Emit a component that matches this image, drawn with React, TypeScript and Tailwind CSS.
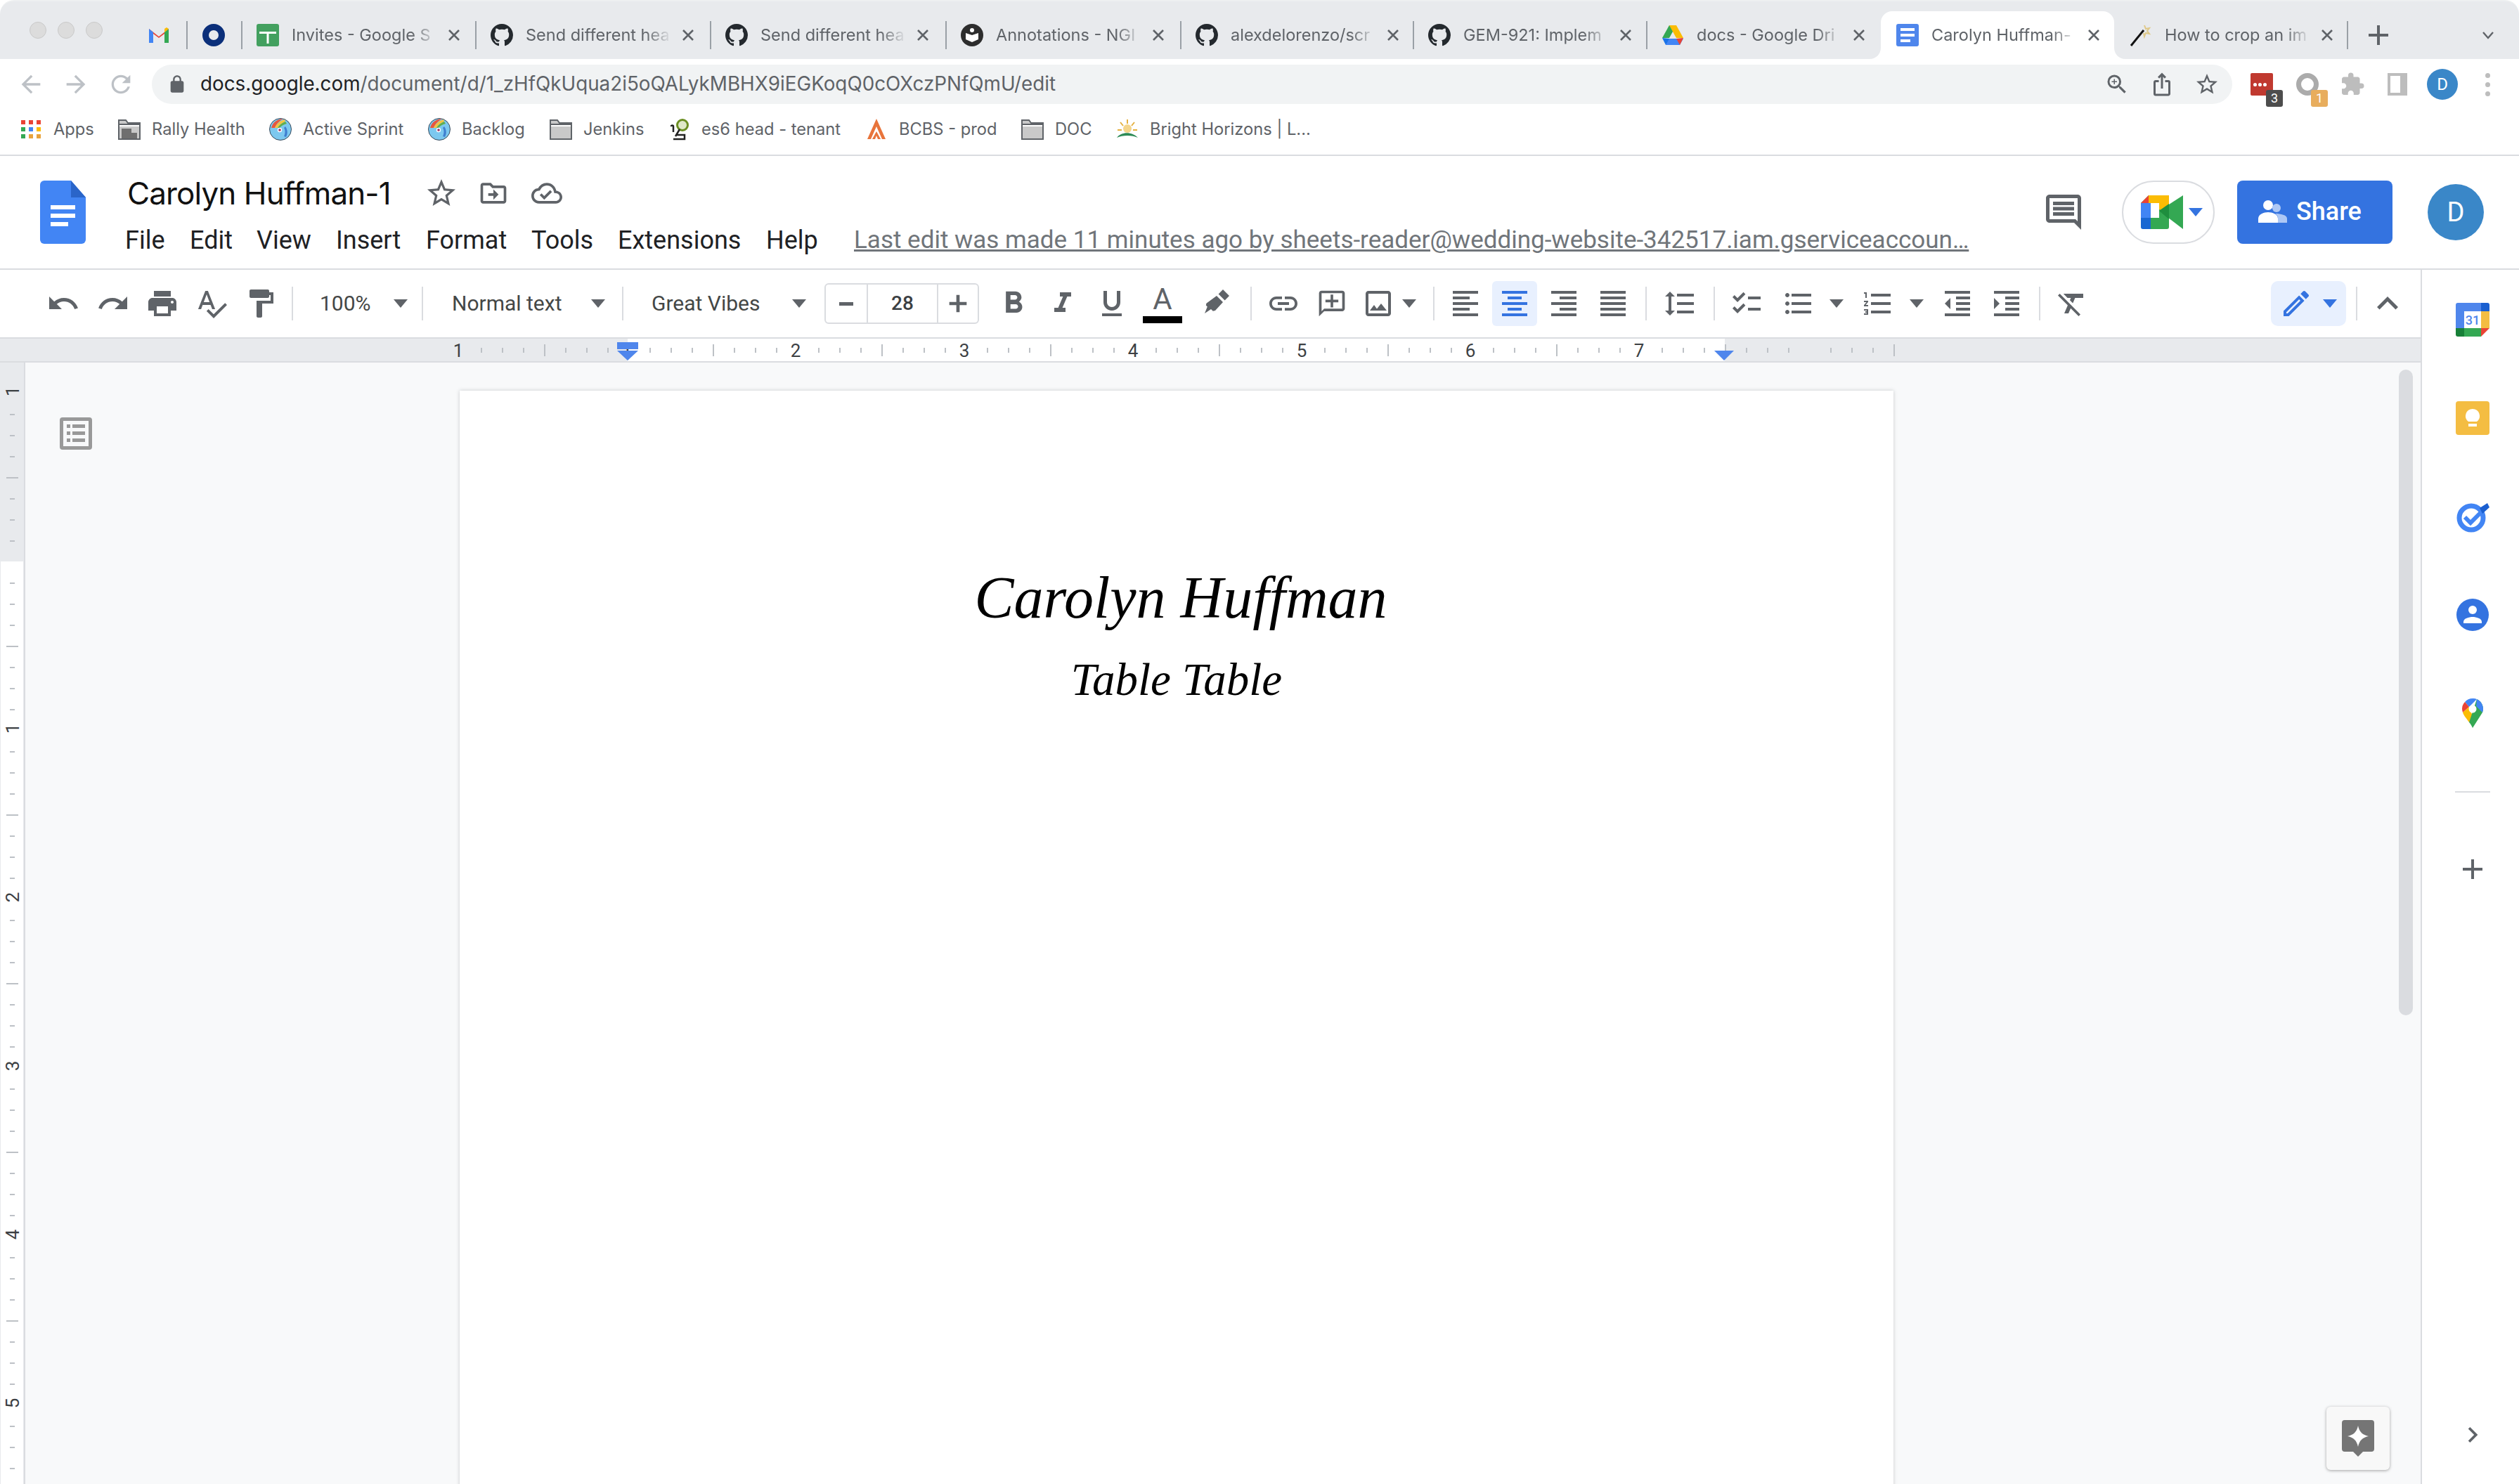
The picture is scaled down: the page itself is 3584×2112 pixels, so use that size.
import React from "react";

const P = {
  undo: "M12.5 8c-2.65 0-5.05.99-6.9 2.6L2 7v9h9l-3.62-3.62c1.39-1.16 3.16-1.88 5.12-1.88 3.54 0 6.55 2.31 7.6 5.5l2.37-.78C21.08 11.03 17.15 8 12.5 8z",
  redo: "M18.4 10.6C16.55 8.99 14.15 8 11.5 8c-4.65 0-8.58 3.03-9.96 7.22L3.9 16c1.05-3.19 4.05-5.5 7.6-5.5 1.95 0 3.73.72 5.12 1.88L13 16h9V7l-3.6 3.6z",
  print: "M19 8H5c-1.66 0-3 1.34-3 3v6h4v4h12v-4h4v-6c0-1.66-1.34-3-3-3zm-3 11H8v-5h8v5zm3-7c-.55 0-1-.45-1-1s.45-1 1-1 1 .45 1 1-.45 1-1 1zm-1-9H6v4h12V3z",
  spell: "M12.45 16h2.09L9.43 3H7.57L2.46 16h2.09l1.12-3h5.64l1.14 3zm-6.02-5L8.5 5.48 10.57 11H6.43zm15.16.59l-8.09 8.09L9.83 16l-1.41 1.41 5.09 5.09L23 13l-1.41-1.41z",
  paint: "M18 4V3c0-.55-.45-1-1-1H5c-.55 0-1 .45-1 1v4c0 .55.45 1 1 1h12c.55 0 1-.45 1-1V6h1v4H9v11c0 .55.45 1 1 1h2c.55 0 1-.45 1-1v-9h8V4h-3z",
  bold: "M15.6 10.79c.97-.67 1.65-1.77 1.65-2.79 0-2.26-1.75-4-4-4H7v14h7.04c2.09 0 3.71-1.7 3.71-3.79 0-1.52-.86-2.82-2.15-3.42zM10 6.5h3c.83 0 1.5.67 1.5 1.5s-.67 1.5-1.5 1.5h-3v-3zm3.5 9H10v-3h3.5c.83 0 1.5.67 1.5 1.5s-.67 1.5-1.5 1.5z",
  italic: "M10 4v3h2.21l-3.42 8H6v3h8v-3h-2.21l3.42-8H18V4z",
  under: "M12 17c3.31 0 6-2.69 6-6V3h-2.5v8c0 1.93-1.57 3.5-3.5 3.5S8.5 12.93 8.5 11V3H6v8c0 3.31 2.69 6 6 6zm-7 2v2h14v-2H5z",
  link: "M3.9 12c0-1.71 1.39-3.1 3.1-3.1h4V7H7c-2.76 0-5 2.24-5 5s2.24 5 5 5h4v-1.9H7c-1.71 0-3.1-1.39-3.1-3.1zM8 13h8v-2H8v2zm9-6h-4v1.9h4c1.71 0 3.1 1.39 3.1 3.1s-1.39 3.1-3.1 3.1h-4V17h4c2.76 0 5-2.24 5-5s-2.24-5-5-5z",
  addc: "M20 2H4c-1.1 0-2 .9-2 2v18l4-4h14c1.1 0 2-.9 2-2V4c0-1.1-.9-2-2-2zm0 14H6l-2 2V4h16v12zM13 5h-2v4H7v2h4v4h2v-4h4V9h-4z",
  image: "M19 3H5c-1.1 0-2 .9-2 2v14c0 1.1.9 2 2 2h14c1.1 0 2-.9 2-2V5c0-1.1-.9-2-2-2zm0 16H5V5h14v14zm-5-7l-3 3.72L9 13l-3 4h12l-4-5z",
  hl: "M17.5 2l4.5 4.5-3.2 3.2-4.5-4.5zM13 6.5l4.5 4.5-5.5 6-1.6.4L9 16l-4.5 3 1.9-4.7-1-1 .3-1.4z",
  left: "M15 15H3v2h12v-2zm0-8H3v2h12V7zM3 13h18v-2H3v2zm0 8h18v-2H3v2zM3 3v2h18V3H3z",
  center: "M7 15v2h10v-2H7zm-4 6h18v-2H3v2zm0-8h18v-2H3v2zm4-6v2h10V7H7zM3 3v2h18V3H3z",
  right: "M3 21h18v-2H3v2zm6-4h12v-2H9v2zm-6-4h18v-2H3v2zm6-4h12V7H9v2zM3 3v2h18V3H3z",
  justify: "M3 21h18v-2H3v2zm0-4h18v-2H3v2zm0-4h18v-2H3v2zm0-4h18V7H3v2zm0-6v2h18V3H3z",
  spacing: "M6 7h2.5L5 3.5 1.5 7H4v10H1.5L5 20.5 8.5 17H6V7zm4-2v2h12V5H10zm0 14h12v-2H10v2zm0-6h12v-2H10v2z",
  check: "M22 7h-9v2h9V7zm0 8h-9v2h9v-2zM5.54 11L2 7.46l1.41-1.41 2.12 2.12 4.24-4.24 1.41 1.41L5.54 11zm0 8L2 15.46l1.41-1.41 2.12 2.12 4.24-4.24 1.41 1.41L5.54 19z",
  bullet: "M4 10.5c-.83 0-1.5.67-1.5 1.5s.67 1.5 1.5 1.5 1.5-.67 1.5-1.5-.67-1.5-1.5-1.5zm0-6c-.83 0-1.5.67-1.5 1.5S3.17 7.5 4 7.5 5.5 6.83 5.5 6 4.83 4.5 4 4.5zm0 12c-.83 0-1.5.68-1.5 1.5s.68 1.5 1.5 1.5 1.5-.68 1.5-1.5-.67-1.5-1.5-1.5zM7 19h14v-2H7v2zm0-6h14v-2H7v2zm0-8v2h14V5H7z",
  number: "M2 17h2v.5H3v1h1v.5H2v1h3v-4H2v1zm1-9h1V4H2v1h1v3zm-1 3h1.8L2 13.1v.9h3v-1H3.2L5 10.9V10H2v1zm5-6v2h14V5H7zm0 14h14v-2H7v2zm0-6h14v-2H7v2z",
  indl: "M11 17h10v-2H11v2zm-8-5l4 4V8l-4 4zm0 9h18v-2H3v2zM3 3v2h18V3H3zm8 6h10V7H11v2zm0 4h10v-2H11v2z",
  indr: "M3 21h18v-2H3v2zM3 8v8l4-4-4-4zm8 9h10v-2H11v2zM3 3v2h18V3H3zm8 6h10V7H11v2zm0 4h10v-2H11v2z",
  clear: "M3.27 5L2 6.27l6.97 6.97L6.5 19h3l1.57-3.66L16.73 21 18 19.73 3.55 5.27 3.27 5zM6 5v.18L8.82 8h2.4l-.72 1.68 2.1 2.1L14.21 8H20V5H6z",
  edit: "M14.06 9.02l.92.92L5.92 19H5v-.92l9.06-9.06M17.66 3c-.25 0-.51.1-.7.29l-1.83 1.83 3.75 3.75 1.83-1.83c.39-.39.39-1.02 0-1.41l-2.34-2.34c-.2-.2-.45-.29-.71-.29zm-3.6 3.19L3 17.25V21h3.75L17.81 9.94l-3.75-3.75z",
  comment: "M21.99 4c0-1.1-.89-2-1.99-2H4c-1.1 0-2 .9-2 2v12c0 1.1.9 2 2 2h14l4 4-.01-18zM20 4v13.17L18.83 16H4V4h16zM6 12h12v2H6zm0-3h12v2H6zm0-3h12v2H6z",
  star: "M22 9.24l-7.19-.62L12 2 9.19 8.63 2 9.24l5.46 4.73L5.82 21 12 17.27 18.18 21l-1.63-7.03L22 9.24zM12 15.4l-3.76 2.27 1-4.28-3.32-2.88 4.38-.38L12 6.1l1.71 4.04 4.38.38-3.32 2.88 1 4.28L12 15.4z",
  move: "M20 6h-8l-2-2H4c-1.1 0-1.99.9-1.99 2L2 18c0 1.1.9 2 2 2h16c1.1 0 2-.9 2-2V8c0-1.1-.9-2-2-2zm0 12H4V6h5.17l2 2H20v10zm-8-4H8v-2h4V9l4 4-4 4v-3z",
  cloud: "M19.35 10.04C18.67 6.59 15.64 4 12 4 9.11 4 6.6 5.64 5.35 8.04 2.34 8.36 0 10.91 0 14c0 3.31 2.69 6 6 6h13c2.76 0 5-2.24 5-5 0-2.64-2.05-4.78-4.65-4.96zM19 18H6c-2.21 0-4-1.79-4-4 0-2.05 1.53-3.76 3.56-3.97l1.07-.11.5-.95C8.08 7.14 9.94 6 12 6c2.62 0 4.88 1.86 5.39 4.43l.3 1.5 1.53.11c1.56.1 2.78 1.41 2.78 2.96 0 1.65-1.35 3-3 3zm-9-3.82l-2.09-2.09L6.5 13.5 10 17l6.01-6.01-1.41-1.41z",
  up: "M7.41 15.41L12 10.83l4.59 4.58L18 14l-6-6-6 6z",
  chevr: "M10 6L8.59 7.41 13.17 12l-4.58 4.59L10 18l6-6z",
  plus: "M19 13h-6v6h-2v-6H5v-2h6V5h2v6h6v2z",
  back: "M20 11H7.83l5.59-5.59L12 4l-8 8 8 8 1.41-1.41L7.83 13H20v-2z",
  fwd: "M12 4l-1.41 1.41L16.17 11H4v2h12.17l-5.58 5.59L12 20l8-8z",
  reload: "M17.65 6.35C16.2 4.9 14.21 4 12 4c-4.42 0-7.99 3.58-7.99 8s3.57 8 7.99 8c3.73 0 6.84-2.55 7.73-6h-2.08c-.82 2.33-3.04 4-5.65 4-3.31 0-6-2.69-6-6s2.69-6 6-6c1.66 0 3.14.69 4.22 1.78L13 11h7V4l-2.35 2.35z",
  zoom: "M15.5 14h-.79l-.28-.27A6.47 6.47 0 0016 9.5 6.5 6.5 0 109.5 16c1.61 0 3.09-.59 4.23-1.57l.27.28v.79l5 4.99L20.49 19l-4.99-5zm-6 0C7.01 14 5 11.99 5 9.5S7.01 5 9.5 5 14 7.01 14 9.5 11.99 14 9.5 14zM10 7H9v2H7v1h2v2h1v-2h2V9h-2z",
  share: "M16 5l-1.42 1.42-1.59-1.59V16h-1.98V4.83L9.42 6.42 8 5l4-4 4 4zm4 5v11c0 1.1-.9 2-2 2H6a2 2 0 01-2-2V10c0-1.11.89-2 2-2h3v2H6v11h12V10h-3V8h3a2 2 0 012 2z",
  puzzle: "M20.5 11H19V7c0-1.1-.9-2-2-2h-4V3.5a2.5 2.5 0 00-5 0V5H4c-1.1 0-1.99.9-1.99 2v3.8H3.5c1.49 0 2.7 1.21 2.7 2.7s-1.21 2.7-2.7 2.7H2V20c0 1.1.9 2 2 2h3.8v-1.5c0-1.49 1.21-2.7 2.7-2.7s2.7 1.21 2.7 2.7V22H17c1.1 0 2-.9 2-2v-4h1.5a2.5 2.5 0 000-5z",
  lock: "M18 8h-1V6c0-2.76-2.24-5-5-5S7 3.24 7 6v2H6c-1.1 0-2 .9-2 2v10c0 1.1.9 2 2 2h12c1.1 0 2-.9 2-2V10c0-1.1-.9-2-2-2zM9 6c0-1.66 1.34-3 3-3s3 1.34 3 3v2H9V6z",
  gh: "M8 0C3.58 0 0 3.58 0 8c0 3.54 2.29 6.53 5.47 7.59.4.07.55-.17.55-.38 0-.19-.01-.82-.01-1.49-2.01.37-2.53-.49-2.69-.94-.09-.23-.48-.94-.82-1.13-.28-.15-.68-.52-.01-.53.63-.01 1.08.58 1.23.82.72 1.21 1.87.87 2.33.66.07-.52.28-.87.51-1.07-1.78-.2-3.64-.89-3.64-3.95 0-.87.31-1.59.82-2.15-.08-.2-.36-1.02.08-2.12 0 0 .67-.21 2.2.82.64-.18 1.32-.27 2-.27.68 0 1.36.09 2 .27 1.53-1.04 2.2-.82 2.2-.82.44 1.1.16 1.92.08 2.12.51.56.82 1.27.82 2.15 0 3.07-1.87 3.75-3.65 3.95.29.25.54.73.54 1.48 0 1.07-.01 1.93-.01 2.2 0 .21.15.46.55.38A8.013 8.013 0 0016 8c0-4.42-3.58-8-8-8z",
};

function Ic({ d, className = "w-[48px] h-[48px] fill-[#5f6368]" }: { d: string; className?: string }) {
  return (
    <svg viewBox="0 0 24 24" className={className}>
      <path d={d} />
    </svg>
  );
}

function Slot({ d, w, color }: { d: string; w: string; color?: string }) {
  return (
    <div className={`${w} flex justify-center items-center shrink-0`}>
      <Ic d={d} className={color ?? "w-[48px] h-[48px] fill-[#5f6368]"} />
    </div>
  );
}

function Caret({ className = "fill-[#5f6368]" }: { className?: string }) {
  return (
    <svg viewBox="0 0 20 12" className={`w-[20px] h-[12px] shrink-0 ${className}`}>
      <path d="M0 0h20L10 12z" />
    </svg>
  );
}

function Sep({ className }: { className: string }) {
  return <div className={`w-[2px] h-[48px] bg-[#dadce0] shrink-0 ${className}`} />;
}

function Github() {
  return (
    <svg viewBox="0 0 16 16" className="w-[32px] h-[32px] fill-[#24292e]">
      <path d={P.gh} />
    </svg>
  );
}
function SheetsIcon() {
  return (
    <svg viewBox="0 0 32 32" className="w-[32px] h-[32px]">
      <rect width="32" height="32" rx="3" fill="#43a05f" />
      <path d="M4 11h24v3H17.5v14h-3V14H4z" fill="#fff" />
    </svg>
  );
}
function AnnotIcon() {
  return (
    <svg viewBox="0 0 32 32" className="w-[32px] h-[32px]">
      <circle cx="16" cy="16" r="16" fill="#2d2d2d" />
      <circle cx="16" cy="9" r="3" fill="#fff" />
      <path d="M7 13l9 3 9-3v9l-9 4-9-4z" fill="#fff" />
    </svg>
  );
}
function DriveIcon() {
  return (
    <svg viewBox="0 0 32 32" className="w-[32px] h-[32px]">
      <path d="M11 2h10l-10 18H1z" fill="#34a853" />
      <path d="M21 2l10 18H21L11 2z" fill="#fbbc04" />
      <path d="M7 21h24l-5 9H6z" fill="#4285f4" />
      <path d="M31 20l-5 10-5-9z" fill="#ea4335" />
      <path d="M1 20l5 10 5-9z" fill="#1a73e8" />
    </svg>
  );
}
function DocsFav() {
  return (
    <svg viewBox="0 0 32 32" className="w-[32px] h-[32px]">
      <rect width="32" height="32" rx="3" fill="#4f86ec" />
      <path d="M6 6h20v4H6zM6 14h20v4H6zM6 22h14v4H6z" fill="#fff" />
    </svg>
  );
}
function Wand() {
  return (
    <svg viewBox="0 0 32 32" className="w-[32px] h-[32px]">
      <path d="M2 31L20 9" stroke="#111" strokeWidth="3" />
      <path d="M21 2l2 5 5-1-3 4 3 4-5-1-2 5-1-5" fill="none" stroke="#dfc98a" strokeWidth="2" />
    </svg>
  );
}

function Tab({ icon, title, w, active, noSep }: { icon: React.ReactNode; title: string; w: string; active?: boolean; noSep?: boolean }) {
  return (
    <div className={`relative ${w} h-[68px] shrink-0 flex items-center ${active ? "bg-white rounded-t-[16px]" : ""}`}>
      <div className={`w-[2px] h-[40px] shrink-0 ${active || noSep ? "" : "bg-[#9aa0a6]"}`} />
      <div className="ml-[20px] w-[32px] h-[32px] shrink-0">{icon}</div>
      <div className="ml-[18px] w-[208px] shrink-0 overflow-hidden whitespace-nowrap text-[23.5px] text-[#5f6368] [font-family:Inter,sans-serif] [mask-image:linear-gradient(to_right,black_82%,transparent_100%)]">
        {title}
      </div>
      <svg viewBox="0 0 20 20" className="ml-[13px] w-[20px] h-[20px] shrink-0 stroke-[#5f6368] stroke-[2.6]">
        <path d="M3 3l14 14M17 3L3 17" />
      </svg>
      {active && (
        <>
          <svg viewBox="0 0 16 16" className="absolute bottom-0 left-[-16px] w-[16px] h-[16px] fill-white">
            <path d="M16 0v16H0C9 16 16 9 16 0z" />
          </svg>
          <svg viewBox="0 0 16 16" className="absolute bottom-0 right-[-16px] w-[16px] h-[16px] fill-white">
            <path d="M0 0v16h16C7 16 0 9 0 0z" />
          </svg>
        </>
      )}
    </div>
  );
}

function TabStrip() {
  return (
    <div className="h-[84px] shrink-0 bg-[#e8eaed] rounded-t-[20px] border-t-2 border-[#eef0f1] flex pt-[14px] pl-[42px]">
      <div className="flex gap-[16px] mt-[15px] self-start">
        <div className="w-[24px] h-[24px] rounded-full bg-[#dcdcdc] border border-[#c9c9c9]" />
        <div className="w-[24px] h-[24px] rounded-full bg-[#dcdcdc] border border-[#c9c9c9]" />
        <div className="w-[24px] h-[24px] rounded-full bg-[#dcdcdc] border border-[#c9c9c9]" />
      </div>
      <div className="flex items-center h-[68px]">
        <svg viewBox="0 0 32 32" className="ml-[64px] w-[32px] h-[32px] shrink-0">
          <path d="M2 7l14 11L30 7v20h-6V14l-8 6-8-6v13H2z" fill="#ea4335" />
          <path d="M2 7v20h6V12z" fill="#4285f4" />
          <path d="M30 7v20h-6V12z" fill="#34a853" />
          <path d="M24 12l6-5-3-2-3 2z" fill="#fbbc04" />
        </svg>
        <div className="ml-[23px] w-[2px] h-[40px] bg-[#9aa0a6] shrink-0" />
        <div className="ml-[21px] w-[32px] h-[32px] rounded-full border-[9px] border-[#0b2f7a] shrink-0" />
        <div className="ml-[23px] flex">
          <Tab w="w-[333px]" icon={<SheetsIcon />} title="Invites - Google S" />
          <Tab w="w-[334px]" icon={<Github />} title="Send different hea" />
          <Tab w="w-[335px]" icon={<Github />} title="Send different hea" />
          <Tab w="w-[334px]" icon={<AnnotIcon />} title="Annotations - NGI" />
          <Tab w="w-[331px]" icon={<Github />} title="alexdelorenzo/scr" />
          <Tab w="w-[332px]" icon={<Github />} title="GEM-921: Implem" />
          <Tab w="w-[334px]" icon={<DriveIcon />} title="docs - Google Dri" />
          <Tab w="w-[332px]" icon={<DocsFav />} title="Carolyn Huffman-" active />
          <Tab w="w-[331px]" icon={<Wand />} title="How to crop an im" noSep />
        </div>
        <div className="w-[2px] h-[40px] bg-[#9aa0a6] shrink-0" />
        <Ic d={P.plus} className="ml-[19px] w-[48px] h-[48px] fill-[#5f6368] shrink-0" />
        <svg viewBox="0 0 20 12" className="ml-[122px] w-[20px] h-[14px] stroke-[#5f6368] stroke-[2.4] fill-none shrink-0">
          <path d="M3 2l7 8 7-8" />
        </svg>
      </div>
    </div>
  );
}

function AddressBar() {
  return (
    <div className="h-[72px] shrink-0 flex items-center pl-[12px]">
      <Slot d={P.back} w="w-[64px]" color="w-[40px] h-[40px] fill-[#bdc1c6]" />
      <Slot d={P.fwd} w="w-[64px]" color="w-[40px] h-[40px] fill-[#bdc1c6]" />
      <Slot d={P.reload} w="w-[64px]" color="w-[40px] h-[40px] fill-[#bdc1c6]" />
      <div className="ml-[12px] w-[2960px] h-[56px] rounded-full bg-[#f1f3f4] flex items-center pl-[22px] pr-[4px] shrink-0">
        <Ic d={P.lock} className="w-[28px] h-[28px] fill-[#5f6368] shrink-0" />
        <div className="ml-[19px] text-[27.8px] text-[#5f6368] whitespace-nowrap [font-family:Inter,sans-serif]">
          <span className="text-[#202124]">docs.google.com</span>/document/d/1_zHfQkUqua2i5oQALykMBHX9iEGKoqQ0cOXczPNfQmU/edit
        </div>
        <div className="ml-auto flex">
          <Slot d={P.zoom} w="w-[64px]" color="w-[36px] h-[36px] fill-[#5f6368]" />
          <Slot d={P.share} w="w-[64px]" color="w-[36px] h-[36px] fill-[#5f6368]" />
          <Slot d={P.star} w="w-[64px]" color="w-[36px] h-[36px] fill-[#5f6368]" />
        </div>
      </div>
      <div className="ml-[11px] flex">
        <div className="relative w-[64px] h-[64px] flex items-center justify-center shrink-0">
          <div className="w-[32px] h-[32px] bg-[#c0392f] rounded-[2px] -translate-x-[1px] flex items-center justify-start pl-[4px] gap-[2px]">
            <div className="w-[5px] h-[5px] rounded-full bg-white" />
            <div className="w-[5px] h-[5px] rounded-full bg-white" />
            <div className="w-[5px] h-[5px] rounded-full bg-white" />
          </div>
          <div className="absolute left-[37px] top-[40px] w-[24px] h-[24px] bg-[#4d4d4d] rounded-[3px] text-white text-[18px] leading-[24px] text-center">3</div>
        </div>
        <div className="relative w-[64px] h-[64px] flex items-center justify-center shrink-0">
          <div className="w-[32px] h-[32px] rounded-full border-[7px] border-[#ababab]" />
          <div className="absolute left-[37px] top-[40px] w-[24px] h-[24px] bg-[#e8ad5d] rounded-[3px] text-white text-[18px] leading-[24px] text-center">1</div>
        </div>
        <Slot d={P.puzzle} w="w-[64px]" color="w-[36px] h-[36px] fill-[#bdbdbd]" />
        <div className="w-[64px] h-[64px] flex items-center justify-center shrink-0">
          <div className="w-[28px] h-[32px] border-[4px] border-r-[10px] border-[#bdbdbd]" />
        </div>
        <div className="w-[64px] h-[64px] flex items-center justify-center shrink-0">
          <div className="w-[44px] h-[44px] rounded-full bg-[#3a87c8] text-white text-[24px] leading-[44px] text-center">D</div>
        </div>
        <div className="w-[64px] h-[64px] flex flex-col items-center justify-center gap-[6px] shrink-0">
          <div className="w-[7px] h-[7px] rounded-full bg-[#bdbdbd]" />
          <div className="w-[7px] h-[7px] rounded-full bg-[#bdbdbd]" />
          <div className="w-[7px] h-[7px] rounded-full bg-[#bdbdbd]" />
        </div>
      </div>
    </div>
  );
}

function FolderIcon({ building }: { building?: boolean }) {
  return (
    <svg viewBox="0 0 32 32" className="w-[32px] h-[32px]">
      <path d="M1 3h10l3 4h17v23H1z" fill="#c9c9c9" stroke="#5f6368" strokeWidth="2" />
      <path d="M1 9h30" stroke="#5f6368" strokeWidth="2" />
      <path d="M2 10h28v2H2z" fill="#fff" />
      {building && <path d="M5 15h14v14H5zM19 21h8v8h-8z" fill="#6f6f6f" />}
    </svg>
  );
}
function RainbowIcon() {
  return (
    <svg viewBox="0 0 32 32" className="w-[32px] h-[32px]">
      <circle cx="16" cy="16" r="15.5" fill="#7cc8ef" stroke="#3b4a5a" />
      <path d="M3 14C5 6 12 1 20 1c-4 2-9 6-12 13z" fill="#e8573f" />
      <path d="M8 14c2-5 7-10 14-12l1 3c-5 2-9 5-11 9z" fill="#f5c342" />
      <path d="M12 14c2-4 6-7 11-9l2 3c-4 1-8 3-10 6z" fill="#5fae4f" />
      <path d="M23 12c3 4 4 10 1 15l-3-1c2-4 2-9 0-12z" fill="#3f7fcf" />
      <circle cx="15" cy="17" r="3.2" fill="#fff" />
      <circle cx="15" cy="17" r="1.8" fill="#a02c5e" />
    </svg>
  );
}

function Bookmarks() {
  const textCls = "ml-[16px] text-[23.7px] text-[#5f6368] whitespace-nowrap [font-family:Inter,sans-serif]";
  return (
    <div className="h-[64px] shrink-0 flex items-center pl-[28px] pb-[8px]">
      <div className="w-[140px] flex items-center shrink-0">
        <svg viewBox="0 0 32 32" className="w-[32px] h-[32px]">
          <path d="M2 3h6v6H2zM13 3h6v6h-6zM24 3h6v6h-6z" fill="#ea4335" />
          <path d="M2 13h6v6H2z" fill="#34a853" />
          <path d="M13 13h6v6h-6z" fill="#4285f4" />
          <path d="M24 13h6v6h-6z" fill="#fbbc04" />
          <path d="M2 23h6v6H2z" fill="#34a853" />
          <path d="M13 23h6v6h-6zM24 23h6v6h-6z" fill="#e8a33d" />
        </svg>
        <span className={textCls}>Apps</span>
      </div>
      <div className="w-[215px] flex items-center shrink-0">
        <FolderIcon building />
        <span className={textCls}>Rally Health</span>
      </div>
      <div className="w-[226px] flex items-center shrink-0">
        <RainbowIcon />
        <span className={textCls}>Active Sprint</span>
      </div>
      <div className="w-[173px] flex items-center shrink-0">
        <RainbowIcon />
        <span className={textCls}>Backlog</span>
      </div>
      <div className="w-[170px] flex items-center shrink-0">
        <FolderIcon />
        <span className={textCls}>Jenkins</span>
      </div>
      <div className="w-[279px] flex items-center shrink-0">
        <svg viewBox="0 0 32 32" className="w-[32px] h-[32px]">
          <circle cx="19" cy="10" r="7.5" fill="#dfe8c8" stroke="#6b8e23" strokeWidth="3" />
          <path d="M15 16L9 26M3 12C3 10 6 10 6 12V20M6 30H22V24H10" fill="none" stroke="#222" strokeWidth="2.5" />
        </svg>
        <span className="ml-[14px] text-[23.7px] text-[#5f6368] whitespace-nowrap [font-family:Inter,sans-serif]">es6 head - tenant</span>
      </div>
      <div className="w-[222px] flex items-center shrink-0">
        <svg viewBox="0 0 32 32" className="w-[32px] h-[32px]">
          <path d="M16 1L29 30h-5L16 12 8 30H3zM16 19l6 11h-4l-2-5-2 5h-4z" fill="#e8743b" />
        </svg>
        <span className={textCls}>BCBS - prod</span>
      </div>
      <div className="w-[135px] flex items-center shrink-0">
        <FolderIcon />
        <span className={textCls}>DOC</span>
      </div>
      <div className="flex items-center shrink-0">
        <svg viewBox="0 0 32 32" className="w-[32px] h-[32px]">
          <circle cx="16" cy="15" r="6" fill="#f4d58a" />
          <path d="M16 2v6M6 6l4 5M26 6l-4 5M2 17h6M24 17h6" stroke="#e4b03f" strokeWidth="2" />
          <path d="M1 28c6-9 22-9 30 0-8-4-22-4-30 0z" fill="#2e8b57" />
        </svg>
        <span className={textCls}>Bright Horizons | L...</span>
      </div>
    </div>
  );
}

function DocsHeader() {
  const m = "text-[36px] text-[#202124] shrink-0";
  return (
    <div className="h-[160px] shrink-0 flex border-t-2 border-[#dadce0] box-content">
      <svg viewBox="0 0 65 90" className="ml-[57px] mt-[35px] w-[65px] h-[90px] shrink-0">
        <path d="M6 0h38l21 24v60a6 6 0 01-6 6H6a6 6 0 01-6-6V6a6 6 0 016-6z" fill="#4285f4" />
        <path d="M44 0l21 24H44z" fill="#2a65c9" />
        <path d="M15 35h35v6H15zM15 47h35v6H15zM15 59h25v6H15z" fill="#fff" />
      </svg>
      <div className="ml-[56px] flex-1 min-w-0 pt-[23px]">
        <div className="h-[60px] flex items-center ml-[3px]">
          <div className="w-[421px] text-[44px] text-[#111] whitespace-nowrap [font-family:Inter,sans-serif] tracking-[-0.9px]">Carolyn Huffman-1</div>
          <Ic d={P.star} className="ml-[2px] w-[48px] h-[48px] fill-[#5f6368] shrink-0" />
          <Ic d={P.move} className="ml-[28px] w-[44px] h-[44px] fill-[#5f6368] shrink-0" />
          <Ic d={P.cloud} className="ml-[32px] w-[44px] h-[44px] fill-[#5f6368] shrink-0" />
        </div>
        <div className="mt-[7px] h-[60px] flex items-center">
          <span className={`w-[92px] ${m}`}>File</span>
          <span className={`w-[95px] ${m}`}>Edit</span>
          <span className={`w-[113px] ${m}`}>View</span>
          <span className={`w-[128px] ${m}`}>Insert</span>
          <span className={`w-[150px] ${m}`}>Format</span>
          <span className={`w-[123px] ${m}`}>Tools</span>
          <span className={`w-[211px] ${m}`}>Extensions</span>
          <span className={`w-[125px] ${m}`}>Help</span>
          <span className="shrink-0 whitespace-nowrap text-[35px] text-[#70757a] underline">
            Last edit was made 11 minutes ago by sheets-reader@wedding-website-342517.iam.gserviceaccoun…
          </span>
        </div>
      </div>
      <div className="mr-[50px] flex items-center shrink-0">
        <Ic d={P.comment} className="w-[60px] h-[60px] fill-[#5f6368] shrink-0" />
        <div className="ml-[53px] w-[132px] h-[90px] rounded-full border-2 border-[#dadce0] flex items-center pl-[25px] shrink-0">
          <svg viewBox="0 0 60 48" className="w-[60px] h-[48px] shrink-0">
            <path d="M11 0h26a3 3 0 013 3v42a3 3 0 01-3 3H14V32H0V11z" fill="#34a853" />
            <path d="M11 0v11H0z" fill="#ea4335" />
            <path d="M11 0h29v20l-5 4-9-4H11z" fill="#fbbc04" />
            <path d="M0 11h14v21H0z" fill="#4285f4" />
            <path d="M0 32h14v16H3a3 3 0 01-3-3z" fill="#1967d2" />
            <path d="M14 11h12v21H14z" fill="#fff" />
            <path d="M26 22L60 0v48z" fill="#34a853" />
            <path d="M26 22l14-10v22z" fill="#1e8e3e" />
          </svg>
          <Caret className="ml-[8px] fill-[#3474e0]" />
        </div>
        <div className="ml-[32px] w-[221px] h-[90px] rounded-[8px] bg-[#3473e0] flex items-center pl-[30px] pb-[3px] shrink-0">
          <svg viewBox="0 0 41 32" className="w-[41px] h-[32px] shrink-0">
            <circle cx="14" cy="7" r="7" fill="#fff" />
            <path d="M0 32v-6c0-6 8-9 14-9s14 3 14 9v6z" fill="#fff" />
            <circle cx="26" cy="11" r="6" fill="#aec8f5" />
            <path d="M28 32v-6c0-3-1-5-4-7 8 0 17 2 17 7v6z" fill="#aec8f5" />
          </svg>
          <span className="ml-[13px] text-[36px] font-medium text-white">Share</span>
        </div>
        <div className="ml-[50px] w-[80px] h-[80px] rounded-full bg-[#3a87c8] text-white text-[38px] leading-[80px] text-center shrink-0">D</div>
      </div>
    </div>
  );
}

function Toolbar() {
  const t = "text-[#444746] text-[30px] whitespace-nowrap shrink-0 pb-[2px]";
  return (
    <div className="h-[96px] shrink-0 flex items-center pl-[55px]">
      <Slot d={P.undo} w="w-[70px]" />
      <Slot d={P.redo} w="w-[71px]" />
      <Slot d={P.print} w="w-[70px]" />
      <Slot d={P.spell} w="w-[70px]" />
      <Slot d={P.paint} w="w-[70px]" />
      <Sep className="ml-[9px]" />
      <span className={`ml-[38px] w-[73px] ${t}`}>100%</span>
      <Caret className="ml-[32px] fill-[#5f6368]" />
      <Sep className="ml-[20px]" />
      <span className={`ml-[41px] w-[157px] ${t}`}>Normal text</span>
      <Caret className="ml-[41px] fill-[#5f6368]" />
      <Sep className="ml-[24px]" />
      <span className={`ml-[40px] w-[156px] ${t}`}>Great Vibes</span>
      <Caret className="ml-[44px] fill-[#5f6368]" />
      <div className="ml-[26px] w-[220px] h-[58px] border-2 border-[#dadce0] rounded-[6px] flex shrink-0">
        <div className="w-[60px] flex items-center justify-center border-r-2 border-[#dadce0]">
          <div className="w-[20px] h-[5px] bg-[#5f6368]" />
        </div>
        <div className="w-[100px] flex items-center justify-center border-r-2 border-[#dadce0] text-[28px] text-[#3c4043] font-medium">28</div>
        <div className="flex-1 flex items-center justify-center">
          <Ic d={P.plus} className="w-[40px] h-[40px] fill-[#5f6368] stroke-[#5f6368] stroke-[0.8]" />
        </div>
      </div>
      <div className="ml-[14px]"><Slot d={P.bold} w="w-[70px]" color="w-[52px] h-[52px] fill-[#5f6368]" /></div>
      <Slot d={P.italic} w="w-[70px]" />
      <Slot d={P.under} w="w-[70px]" />
      <div className="w-[74px] flex flex-col items-center shrink-0">
        <span className="text-[42px] leading-[44px] text-[#5f6368] font-normal">A</span>
        <div className="mt-[2px] w-[56px] h-[10px] bg-black" />
      </div>
      <Slot d={P.hl} w="w-[76px]" />
      <Sep className="ml-[12px]" />
      <div className="ml-[10px]"><Slot d={P.link} w="w-[70px]" /></div>
      <Slot d={P.addc} w="w-[68px]" color="w-[44px] h-[44px] fill-[#5f6368]" />
      <Slot d={P.image} w="w-[64px]" />
      <Caret className="ml-[2px] fill-[#5f6368]" />
      <Sep className="ml-[24px]" />
      <div className="ml-[9px]"><Slot d={P.left} w="w-[70px]" /></div>
      <div className="ml-[3px] w-[64px] h-[64px] rounded-[6px] bg-[#e8f0fe] flex items-center justify-center shrink-0">
        <Ic d={P.center} className="w-[48px] h-[48px] fill-[#3473e0]" />
      </div>
      <div className="ml-[3px]"><Slot d={P.right} w="w-[70px]" /></div>
      <Slot d={P.justify} w="w-[70px]" />
      <Sep className="ml-[11px]" />
      <div className="ml-[12px]"><Slot d={P.spacing} w="w-[70px]" /></div>
      <Sep className="ml-[13px]" />
      <div className="ml-[10px]"><Slot d={P.check} w="w-[70px]" /></div>
      <div className="ml-[4px]"><Slot d={P.bullet} w="w-[70px]" /></div>
      <Caret className="ml-[9px] fill-[#5f6368]" />
      <div className="ml-[14px]"><Slot d={P.number} w="w-[70px]" /></div>
      <Caret className="ml-[10px] fill-[#5f6368]" />
      <div className="ml-[13px]"><Slot d={P.indl} w="w-[70px]" /></div>
      <Slot d={P.indr} w="w-[70px]" />
      <Sep className="ml-[11px]" />
      <div className="ml-[10px]"><Slot d={P.clear} w="w-[70px]" /></div>
      <div className="ml-[248px] w-[107px] h-[64px] rounded-[10px] bg-[#e8f0fe] flex items-center pl-[12px] shrink-0">
        <Ic d={P.edit} className="w-[48px] h-[48px] fill-[#3473e0] shrink-0" />
        <Caret className="ml-[14px] fill-[#3473e0]" />
      </div>
      <Sep className="ml-[14px]" />
      <div className="ml-[8px]"><Slot d={P.up} w="w-[70px]" color="w-[60px] h-[60px] fill-[#5f6368]" /></div>
    </div>
  );
}

const hInches = [1, 1, 2, 3, 4, 5, 6, 7];
const hTicks = Array.from({ length: 69 }, (_, i) => 654 + i * 30);
function HRuler() {
  return (
    <div className="relative h-[36px] shrink-0 border-y-2 border-[#dadce0] bg-[#e8eaed] flex">
      <div className="ml-[893px] w-[1561px] bg-white" />
      <svg viewBox="0 0 3444 32" className="absolute left-0 top-0 w-[3444px] h-[32px]">
        {hTicks.map((x) => {
          const k = (x - 654) / 30;
          if (k % 8 === 0) return null;
          const long = k % 8 === 4;
          return <rect key={x} x={x} y={long ? 8 : 13} width="2" height={long ? 17 : 7} fill="#bdc1c6" />;
        })}
        {hInches.map((n, i) => (
          <text key={i} x={652 + i * 240} y="26" textAnchor="middle" fontFamily="Roboto" fontSize="26" fill="#3c4043">{n}</text>
        ))}
        <rect x="878" y="5" width="30" height="10" fill="#4f86ec" />
        <path d="M878 17h30l-15 14z" fill="#4f86ec" />
        <path d="M2439 17h28l-14 14z" fill="#4f86ec" />
      </svg>
    </div>
  );
}

const vTicks = Array.from({ length: 60 }, (_, i) => i);
const vLabels: [number, number][] = [[41, 1], [521, 1], [761, 2], [1001, 3], [1241, 4], [1481, 5]];
function VRuler() {
  return (
    <div className="relative w-[36px] shrink-0 border-r-2 border-[#dadce0] bg-[#e8eaed] flex flex-col">
      <div className="h-[283px] shrink-0" />
      <div className="flex-1 bg-white ml-[1px] mr-[1px]" />
      <svg viewBox="0 0 34 1596" className="absolute left-0 top-0 w-[34px] h-[1596px]">
        {vTicks.map((i) => {
          const y = 41 + i * 30;
          const k = i % 8;
          if (k === 0) return null;
          const long = k === 4;
          return <rect key={i} x={long ? 9 : 14} y={y + 2} width={long ? 17 : 7} height="2" fill="#bdc1c6" />;
        })}
        {vLabels.map(([y, n]) => (
          <text key={y} transform={`translate(27 ${y}) rotate(-90)`} textAnchor="middle" fontFamily="Roboto" fontSize="26" fill="#3c4043">{n}</text>
        ))}
      </svg>
    </div>
  );
}

function Canvas() {
  return (
    <div className="relative flex-1 bg-[#f8f9fa] overflow-hidden">
      <div className="ml-[618px] mt-[40px] w-[2040px] h-[1700px] bg-white shadow-[0_0_5px_rgba(60,64,67,0.25)] flex flex-col items-center pt-[240px] [font-family:'Liberation_Serif',serif] italic text-black">
        <div className="text-[84px] leading-[110px] pl-[12px] whitespace-nowrap">Carolyn Huffman</div>
        <div className="mt-[21px] text-[65px] leading-[80px] whitespace-nowrap">Table Table</div>
      </div>
      <svg viewBox="0 0 46 46" className="absolute left-[49px] top-[78px] w-[46px] h-[46px] fill-[#999]">
        <path fillRule="evenodd" d="M4 0h38a4 4 0 014 4v38a4 4 0 01-4 4H4a4 4 0 01-4-4V4a4 4 0 014-4zm1 5v36h36V5zM10 10h5v5h-5zM18 10h18v5H18zM10 20h5v5h-5zM18 20h18v5H18zM10 30h5v5h-5zM18 30h18v5H18z" />
      </svg>
      <div className="absolute right-[11px] top-[10px] w-[20px] h-[919px] rounded-full bg-[#dadce0]" />
      <div className="absolute right-[44px] bottom-[20px] w-[90px] h-[90px] rounded-[6px] bg-[#f8f8f8] shadow-[0_1px_4px_rgba(0,0,0,0.35)] flex items-center justify-center">
        <svg viewBox="0 0 46 52" className="w-[46px] h-[52px]">
          <path d="M4 0h38a4 4 0 014 4v37a4 4 0 01-4 4H30l-7 7-7-7H4a4 4 0 01-4-4V4a4 4 0 014-4z" fill="#757575" />
          <path d="M23 8c2 9 6 13 15 15-9 2-13 6-15 15-2-9-6-13-15-15 9-2 13-6 15-15z" fill="#fff" />
        </svg>
      </div>
    </div>
  );
}

function SidePanel() {
  const slot = "h-[140px] flex items-center justify-center shrink-0";
  return (
    <div className="w-[138px] border-l-2 border-[#dadce0] box-content pl-[3px] flex flex-col items-center pt-[1px] shrink-0">
      <div className={slot}>
        <svg viewBox="0 0 48 48" className="w-[48px] h-[48px]">
          <path d="M3 0h33v12H12v24H0V3a3 3 0 013-3z" fill="#4f86ec" />
          <path d="M36 0h9a3 3 0 013 3v9H36z" fill="#1a5fd0" />
          <path d="M36 12h12v24H36z" fill="#f4bd42" />
          <path d="M12 36h24v12H12z" fill="#34a853" />
          <path d="M0 36h12v12H3a3 3 0 01-3-3z" fill="#188038" />
          <path d="M36 36h12L36 48z" fill="#ea4335" />
          <rect x="12" y="12" width="24" height="24" fill="#fff" />
          <text x="24" y="31" textAnchor="middle" fontFamily="Roboto" fontSize="18" fontWeight="500" fill="#4f86ec">31</text>
        </svg>
      </div>
      <div className={slot}>
        <svg viewBox="0 0 48 48" className="w-[48px] h-[48px]">
          <rect width="48" height="48" rx="4" fill="#f4bd42" />
          <path d="M24 11a10 10 0 016 18H18a10 10 0 016-18z" fill="#fff" />
          <rect x="18" y="32" width="12" height="4" fill="#fff" />
        </svg>
      </div>
      <div className={slot}>
        <svg viewBox="0 0 48 48" className="w-[48px] h-[48px]">
          <circle cx="22" cy="26" r="17" fill="none" stroke="#4285f4" strokeWidth="7" />
          <path d="M13 25l8 8 15-15" fill="none" stroke="#4285f4" strokeWidth="6" />
          <path d="M34 12l11-7 3 6-10 9z" fill="#1a5fd0" />
        </svg>
      </div>
      <div className={slot}>
        <svg viewBox="0 0 46 46" className="w-[46px] h-[46px]">
          <circle cx="23" cy="23" r="23" fill="#3473e0" />
          <circle cx="23" cy="16" r="6" fill="#fff" />
          <path d="M10 33c0-5 8-7 13-7s13 2 13 7v2H10z" fill="#fff" />
        </svg>
      </div>
      <div className={slot}>
        <svg viewBox="0 0 30 42" className="w-[30px] h-[42px]">
          <path d="M15 0a15 15 0 00-11 5l6 7 11-11a15 15 0 00-6-1z" fill="#4285f4" />
          <path d="M4 5a15 15 0 00-3 15l9-8z" fill="#ea4335" />
          <path d="M1 20c2 6 6 9 9 14l11-13-6 4-5-13z" fill="#fbbc04" />
          <path d="M21 1a15 15 0 018 19L15 42c-2-4-3-6-5-8z" fill="#34a853" />
          <path d="M21 1a15 15 0 018 19l-9-9z" fill="#4285f4" />
          <circle cx="15" cy="15" r="5.5" fill="#fff" />
        </svg>
      </div>
      <div className="mt-[41px] w-[50px] h-[2px] bg-[#dadce0]" />
      <div className="mt-[79px] h-[60px] flex items-center justify-center">
        <Ic d={P.plus} className="w-[48px] h-[48px] fill-[#5f6368]" />
      </div>
      <div className="mt-auto mb-[50px] h-[40px] flex items-center justify-center">
        <Ic d={P.chevr} className="w-[44px] h-[44px] fill-[#5f6368]" />
      </div>
    </div>
  );
}

export default function App() {
  return (
    <div className="w-[3584px] h-[2112px] overflow-hidden bg-white flex flex-col [font-family:Roboto,sans-serif]">
      <TabStrip />
      <AddressBar />
      <Bookmarks />
      <DocsHeader />
      <div className="flex-1 min-h-0 flex border-t-2 border-[#dadce0]">
        <div className="w-[3444px] shrink-0 flex flex-col">
          <Toolbar />
          <HRuler />
          <div className="flex-1 min-h-0 flex">
            <VRuler />
            <Canvas />
          </div>
        </div>
        <SidePanel />
      </div>
    </div>
  );
}
